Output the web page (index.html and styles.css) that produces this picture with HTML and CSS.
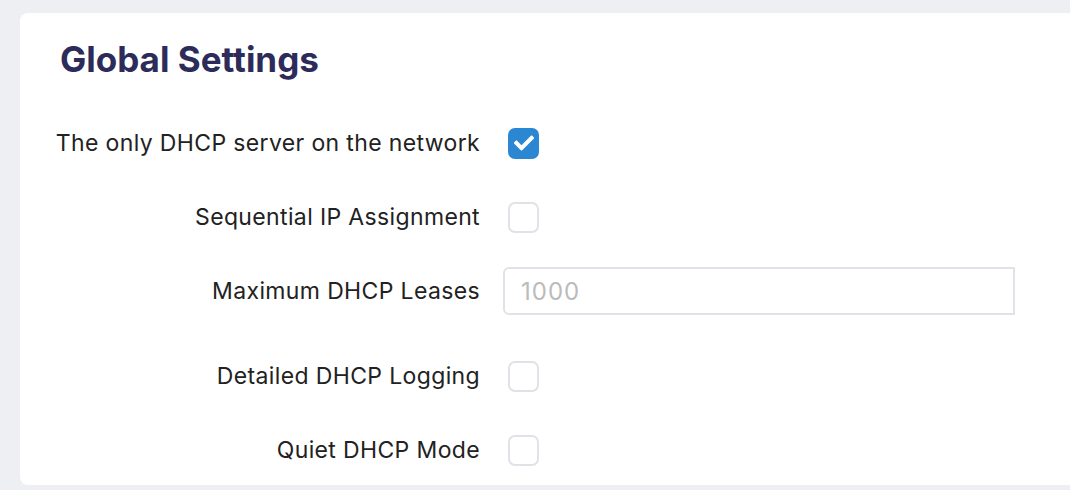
FILE: index.html
```html
<!DOCTYPE html>
<html lang="en">

<head>
  <meta charset="UTF-8">
  <title>DHCP Settings</title>
  <link rel="stylesheet" href="styles.css">
</head>

<body>
  <div class="settings-card">
    <h2>Global Settings</h2>

    <form class="settings-form">
      <div class="form-row">
        <label for="onlyServer">The only DHCP server on the network</label>
        <div class="control">
          <span class="check checked" id="onlyServer">
            <svg viewBox="0 0 512 512" width="20" height="20">
              <path fill="#fff" d="M173.9 439.4l-166.4-166.4c-10-10-10-26.2 0-36.2l36.2-36.2c10-10 26.2-10 36.2 0L192 312.7 432.1 72.6c10-10 26.2-10 36.2 0l36.2 36.2c10 10 10 26.2 0 36.2l-294.4 294.4c-10 10-26.2 10-36.2 0z" />
            </svg>
          </span>
        </div>
      </div>

      <div class="form-row">
        <label>Sequential IP Assignment</label>
        <div class="control"><span class="check"></span></div>
      </div>

      <div class="form-row input-row">
        <label for="maxLeases">Maximum DHCP Leases</label>
        <div class="control">
          <input type="text" id="maxLeases" placeholder="1000" />
        </div>
      </div>

      <div class="form-row">
        <label>Detailed DHCP Logging</label>
        <div class="control"><span class="check"></span></div>
      </div>

      <div class="form-row">
        <label>Quiet DHCP Mode</label>
        <div class="control"><span class="check"></span></div>
      </div>
    </form>
  </div>
</body>

</html>
```

FILE: styles.css
```css
body {
  background-color: #eeeff3;
  color: #222;
  font-family: Inter, "Noto Sans", sans-serif;
  margin: 0;
  padding: 13px 0 0 20px;
  height: 490px;
  box-sizing: border-box;
  overflow: hidden;
}

.settings-card {
  background-color: #fff;
  border-radius: 8px;
  width: 1080px;
  height: 472px;
  padding: 25px 0 0 20px;
  box-sizing: border-box;
}

h2 {
  margin: 0 0 39px 20px;
  font-size: 35px;
  line-height: 42px;
  font-weight: 700;
  color: #2d2b5a;
}

.form-row {
  display: flex;
  align-items: center;
  min-height: 48px;
  margin-bottom: 26px;
}

.input-row {
  margin-bottom: 37px;
}

.form-row label {
  width: 440px;
  text-align: right;
  font-size: 23px;
  letter-spacing: 0.36px;
  color: #222;
}

.control {
  margin-left: 23px;
  display: flex;
  align-items: center;
}

.check {
  width: 31px;
  height: 31px;
  margin-left: 5px;
  box-sizing: border-box;
  border: 2px solid #dfe2e7;
  border-radius: 7px;
  display: flex;
  align-items: center;
  justify-content: center;
}

.check.checked {
  background-color: #2b87d1;
  border-color: #2b87d1;
}

input {
  width: 512px;
  height: 48px;
  box-sizing: border-box;
  padding: 0 16px;
  border: 2px solid #dfe2e7;
  border-radius: 6px 0 0 6px;
  font-family: Inter, "Noto Sans", sans-serif;
  font-size: 24px;
  letter-spacing: 1px;
  color: #222;
  outline: none;
}

input::placeholder {
  color: #bbb;
}
```
